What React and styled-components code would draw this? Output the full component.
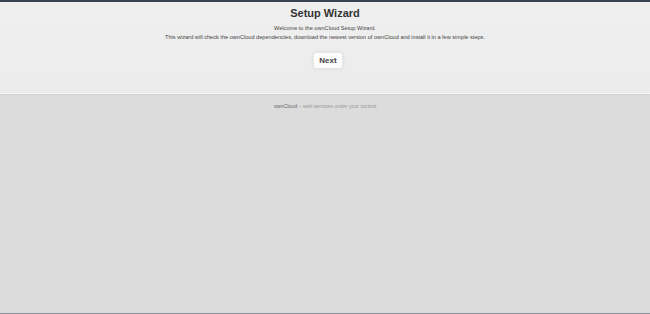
import React from "react";
import styled, { createGlobalStyle } from "styled-components";

const Global = createGlobalStyle`
    html, body {
        margin: 0;
        padding: 0;
        height: 100%;
        background: #dcdcdc;
        font-family: "Liberation Sans", Arial, sans-serif;
    }
    #root {
        height: 100%;
    }
`;

const Page = styled.div`
    min-height: 100%;
    display: flex;
    flex-direction: column;
    border-top: 2px solid #3b4250;
    border-bottom: 1px solid #8c9096;
    box-sizing: border-box;
`;

const Header = styled.div`
    background: linear-gradient(#efefef, #ececec);
    border-bottom: 1px solid #f7f7f7;
    box-shadow: 0 1px 0 #d3d3d3;
    height: 91px;
    display: flex;
    flex-direction: column;
    align-items: center;
    color: #444;
`;

const Title = styled.h1`
    margin: 5px 0 0;
    font-size: 11px;
    font-weight: bold;
    color: #333;
`;

const Intro = styled.p`
    margin: 5px 0 0;
    font-size: 5.6px;
    line-height: 8.5px;
    text-align: center;
    color: #444;
`;

const NextButton = styled.button`
    margin: 11px 0 0 6px;
    padding: 3px 5px;
    font-family: inherit;
    font-size: 8px;
    font-weight: bold;
    color: #444;
    background: #fdfdfd;
    border: 1px solid #e6e6e6;
    border-radius: 3px;
    box-shadow: 0 0 3px #d8d8d8;
    cursor: pointer;
`;

const Footer = styled.p`
    margin: 9px 0 0;
    text-align: center;
    font-size: 5.2px;
    color: #999;
    & strong {
        color: #666;
        font-weight: normal;
    }
`;

export default function App() {
    return (
        <>
            <Global />
            <Page>
                <Header>
                    <Title>Setup Wizard</Title>
                    <Intro>
                        Welcome to the ownCloud Setup Wizard.
                        <br />
                        This wizard will check the ownCloud dependencies, download the newest version of ownCloud and install it in a few simple steps.
                    </Intro>
                    <NextButton>Next</NextButton>
                </Header>
                <Footer>
                    <strong>ownCloud</strong> – web services under your control
                </Footer>
            </Page>
        </>
    );
}
